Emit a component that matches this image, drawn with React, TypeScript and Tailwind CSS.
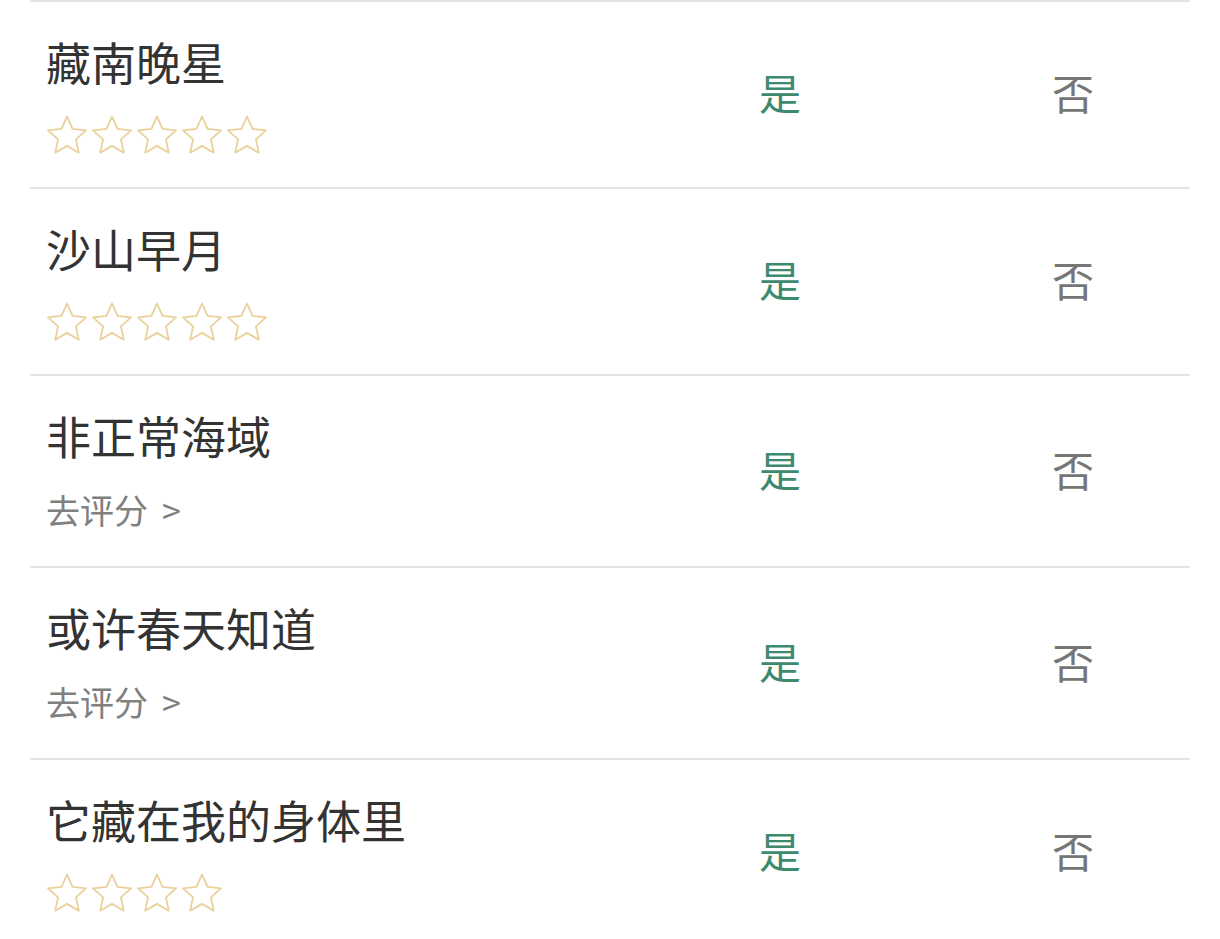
import React from 'react';

type Item = { title: string; stars: number | null };

const items: Item[] = [
    { title: '藏南晚星', stars: 5 },
    { title: '沙山早月', stars: 5 },
    { title: '非正常海域', stars: null },
    { title: '或许春天知道', stars: null },
    { title: '它藏在我的身体里', stars: 4 },
];

const Star: React.FC = () => (
    <svg width="42" height="40" viewBox="0 0 42 40" fill="none">
        <polygon
            points="21,1.5 26.53,13.9 40.02,15.32 29.94,24.4 32.76,37.68 21,30.9 9.24,37.68 12.06,24.4 1.98,15.32 15.47,13.9"
            stroke="#e9d199"
            strokeWidth="1.8"
            strokeLinejoin="round"
        />
    </svg>
);

const Row: React.FC<{ item: Item }> = ({ item }) => (
    <div className="flex items-center border-t-2 border-[#e4e4e4]">
        <div className="flex-1 pl-4 pt-[34px] pb-[32px]">
            <div className="text-[45px] leading-[52px] text-[#333333]">{item.title}</div>
            {item.stars !== null ? (
                <div className="mt-[27px] flex gap-[3px]">
                    {Array.from({ length: item.stars }).map((_, i) => (
                        <Star key={i} />
                    ))}
                </div>
            ) : (
                <div className="mt-[28px] pb-1 text-[34px] leading-[40px] text-[#808080]">
                    去评分<span className="ml-[14px]">&gt;</span>
                </div>
            )}
        </div>
        <div className="w-[352px] pb-[6px] text-center text-[42px] text-[#3e8a6f]">是</div>
        <div className="w-[234px] pb-[6px] text-center text-[42px] text-[#767676]">否</div>
    </div>
);

export default function App() {
    return (
        <div className="min-h-screen bg-white" style={{ fontFamily: '"Noto Sans CJK SC", "Noto Sans", sans-serif' }}>
            <div className="mx-[30px] h-[939px] overflow-hidden">
                {items.map((item) => (
                    <Row key={item.title} item={item} />
                ))}
            </div>
        </div>
    );
}
